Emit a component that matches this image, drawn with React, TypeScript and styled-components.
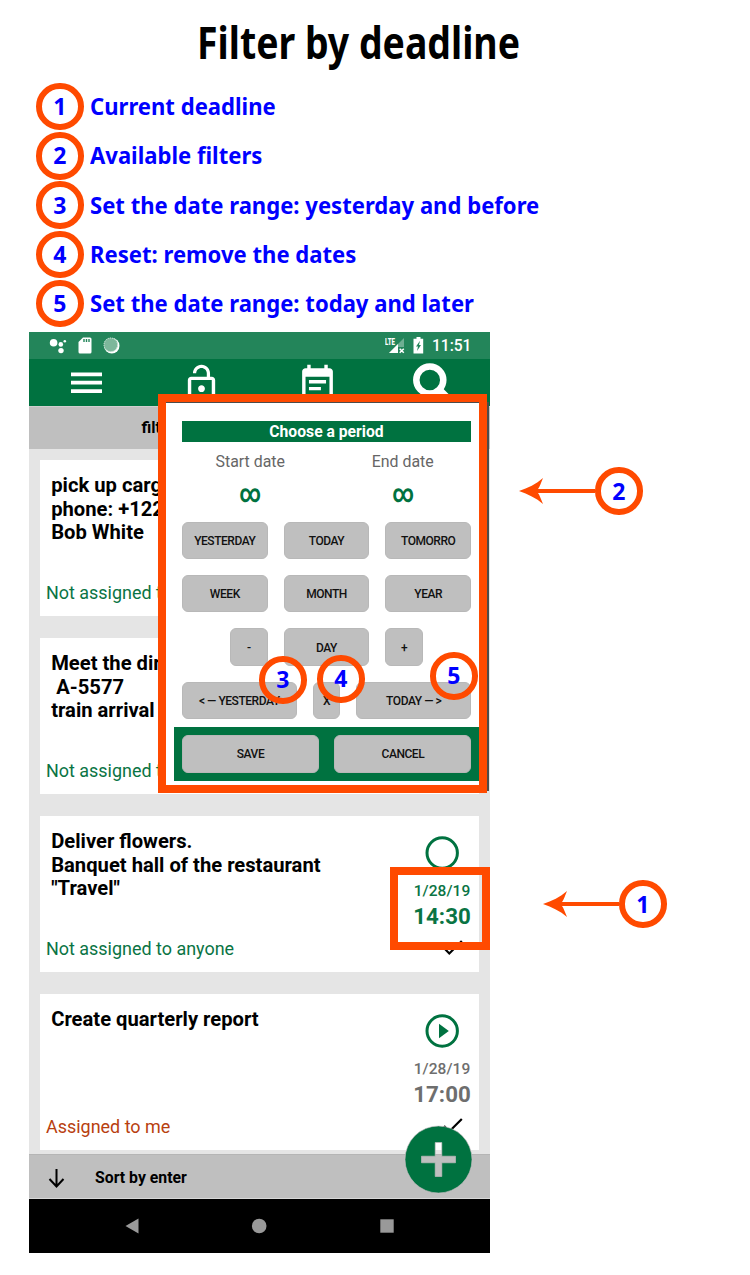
import React from "react";
import styled, { createGlobalStyle } from "styled-components";

const GREEN = "#007240";
const ORANGE = "#ff4a00";
const GREY = "#bfbfbf";

const GlobalStyle = createGlobalStyle`
  *, *::before, *::after { box-sizing: border-box; }
  body { margin: 0; background: #fff; }
`;

const Page = styled.main`
  position: relative;
  width: 750px;
  height: 1275px;
  overflow: hidden;
  background: #fff;
  font-family: Roboto, sans-serif;
`;

const Title = styled.h1`
  margin: 0 0 0 197px;
  padding-top: 12px;
  height: 82px;
  font: 700 44.5px/60px "Noto Sans", sans-serif;
  color: #000;
  white-space: nowrap;
  transform: scaleX(0.841);
  transform-origin: 0 0;
`;

const Legend = styled.ol`
  list-style: none;
  margin: 0;
  padding: 0 0 0 36px;
  height: 250px;
`;

const LegendRow = styled.li`
  display: flex;
  align-items: center;
  gap: 6px;
  height: 49.25px;
`;

const LegendText = styled.span`
  padding-bottom: 1px;
  font: 700 23px/32px "Noto Sans", sans-serif;
  color: #0000ff;
  white-space: nowrap;
  transform: scaleX(0.96);
  transform-origin: 0 50%;
`;

const Badge = styled.span`
  display: flex;
  flex: none;
  align-items: center;
  justify-content: center;
  width: 47.5px;
  height: 47.5px;
  border: 6px solid ${ORANGE};
  border-radius: 50%;
  padding-bottom: 1px;
  font: 700 23px/32px "Noto Sans", sans-serif;
  color: #0000ff;
`;

const Phone = styled.section`
  position: relative;
  display: flex;
  flex-direction: column;
  width: 461px;
  height: 921px;
  margin-left: 29px;
  background: #e5e5e5;
  overflow: hidden;
`;

const StatusBar = styled.div`
  display: flex;
  flex: none;
  align-items: center;
  height: 27px;
  padding: 0 18.5px 0 20px;
  background: #23855a;
`;

const StatusGroup = styled.div<{ $gap: number }>`
  display: flex;
  align-items: center;
  gap: ${(p) => p.$gap}px;
`;

const Clock = styled.span`
  font-size: 15.6px;
  font-weight: 500;
  line-height: 28px;
  color: #fff;
`;

const Spacer = styled.div`
  flex: 1;
`;

const AppBar = styled.nav`
  display: grid;
  flex: none;
  grid-template-columns: repeat(4, 1fr);
  justify-items: center;
  height: 47px;
  padding-top: 4px;
  background: ${GREEN};
`;

const FilterBar = styled.div`
  flex: none;
  height: 43px;
  padding: 0 0 1px 112.5px;
  border-top: 1px solid #cfcfcf;
  background: ${GREY};
  font-size: 16px;
  font-weight: 700;
  line-height: 42px;
  color: #000;
`;

const CardList = styled.div`
  display: flex;
  flex: none;
  flex-direction: column;
  gap: 22.4px;
  height: 705px;
  padding: 11px 11px 0;
`;

const Card = styled.article`
  display: flex;
  flex: none;
  justify-content: space-between;
  height: 155.6px;
  background: #fff;
`;

const CardText = styled.div`
  display: flex;
  flex-direction: column;
  justify-content: space-between;
  padding: 14.4px 0 11px 6px;
`;

const CardTitle = styled.div`
  padding-left: 5.2px;
  font-size: 20.2px;
  font-weight: 700;
  line-height: 23.3px;
  white-space: pre;
  color: #000;
`;

const Assignee = styled.div<{ $mine?: boolean }>`
  font-size: 17.95px;
  line-height: 24px;
  white-space: nowrap;
  color: ${(p) => (p.$mine ? "#b8400f" : "#0a7444")};
`;

const CardMeta = styled.div<{ $color: string }>`
  display: flex;
  flex-direction: column;
  align-items: center;
  width: 74px;
  padding-top: 20px;
  color: ${(p) => p.$color};
`;

const CardDate = styled.span`
  margin-top: 11px;
  font-size: 15.5px;
  font-weight: 500;
  line-height: 20px;
  letter-spacing: 0.05px;
`;

const CardTime = styled.span`
  margin-top: 1px;
  font-size: 22.3px;
  font-weight: 700;
  line-height: 28px;
`;

const CheckSlot = styled.div`
  height: 16px;
  margin: 10px 0 0 22px;
`;

const SortBar = styled.div`
  display: flex;
  flex: none;
  align-items: center;
  gap: 30px;
  height: 45px;
  padding: 1px 0 0 19px;
  border-top: 1px solid #b5b5b5;
  border-bottom: 1px solid #d8d8d8;
  background: ${GREY};
  font-size: 15.8px;
  font-weight: 700;
  color: #000;
`;

const NavBar = styled.div`
  display: flex;
  flex: 1;
  align-items: center;
  justify-content: space-between;
  padding: 0 96px 0 95.5px;
  background: #000;
`;

const Fab = styled.div`
  position: absolute;
  left: 375px;
  top: 793px;
  width: 69px;
  height: 69px;
`;

const Dialog = styled.div`
  position: absolute;
  left: 129px;
  top: 70px;
  display: flex;
  flex-direction: column;
  width: 331px;
  height: 389px;
  padding: 17.5px 16px 0 24px;
  border: 1px solid #4c4c4c;
  border-width: 1px 2px 1px 0;
  background: #fff;
`;

const DialogTitle = styled.div`
  flex: none;
  width: 289px;
  height: 21px;
  background: ${GREEN};
  font-size: 15.7px;
  font-weight: 700;
  line-height: 22px;
  text-align: center;
  color: #fff;
`;

const RangeGrid = styled.div`
  display: grid;
  flex: none;
  grid-template-columns: 1fr 1fr;
  grid-template-rows: 21px 30px;
  row-gap: 7px;
  column-gap: 16px;
  width: 289px;
  height: 80px;
  padding-top: 9px;
  text-align: center;
`;

const RangeLabel = styled.span`
  font-size: 15.9px;
  line-height: 21px;
  color: #666;
`;

const RangeValue = styled.span`
  font-size: 25px;
  font-weight: 700;
  line-height: 30px;
  color: ${GREEN};
  transform: scaleX(0.83);
`;

const ButtonRow = styled.div`
  display: flex;
  flex: none;
  justify-content: center;
  gap: 16.2px;
  width: 289px;
  margin-bottom: 16.1px;
`;

const PeriodButton = styled.button<{ $w: number }>`
  flex: none;
  width: ${(p) => p.$w}px;
  height: 37.4px;
  padding: 1px 0 0;
  border: 1px solid #b8b8b8;
  border-radius: 6px;
  background: ${GREY};
  font: 500 12px/16px Roboto, sans-serif;
  letter-spacing: -0.45px;
  color: #111;
  white-space: nowrap;
`;

const DialogActions = styled.div`
  display: flex;
  flex: none;
  gap: 15.4px;
  width: 312px;
  margin: -8.3px 0 0 -8px;
  padding: 8px;
  height: 54px;
  background: ${GREEN};
`;

const Frame = styled.div<{ $x: number; $y: number; $w: number; $h: number }>`
  position: absolute;
  left: ${(p) => p.$x}px;
  top: ${(p) => p.$y}px;
  width: ${(p) => p.$w}px;
  height: ${(p) => p.$h}px;
  border: 8px solid ${ORANGE};
`;

const Callout = styled.div<{ $x: number; $y: number }>`
  position: absolute;
  left: ${(p) => p.$x}px;
  top: ${(p) => p.$y}px;
  display: flex;
  align-items: center;
`;

const LEGEND = [
  "Current deadline",
  "Available filters",
  "Set the date range: yesterday and before",
  "Reset: remove the dates",
  "Set the date range: today and later",
];

const ArrowDrawing = styled.svg`
  display: block;
`;

const Arrow = () => (
  <ArrowDrawing width="76" height="28" viewBox="0 0 76 28">
    <path d="M0 14 C9 11 17 7 24 1 C22 6 20.500 10 19 12 H76 V16 H19 C20.500 18 22 22 24 27 C17 21 9 17 0 14 Z" fill={ORANGE} />
  </ArrowDrawing>
);

const MenuIcon = () => (
  <svg width="31" height="41" viewBox="0 0 31 41">
    <path d="M0 11.300H31M0 19.700H31M0 28.200H31" stroke="#fff" strokeWidth="3.700" />
  </svg>
);

const LockIcon = () => (
  <svg width="41" height="41" viewBox="0 0 24 24" fill="#fff">
    <path d="M12 17c1.100 0 2-.9 2-2s-.9-2-2-2-2 .9-2 2 .9 2 2 2zm6-9h-1V6c0-2.760-2.240-5-5-5S7 3.240 7 6h1.900c0-1.710 1.390-3.100 3.100-3.100 1.710 0 3.100 1.390 3.100 3.100v2H6c-1.100 0-2 .9-2 2v10c0 1.100.9 2 2 2h12c1.100 0 2-.9 2-2V10c0-1.100-.9-2-2-2zm0 12H6V10h12v10z" />
  </svg>
);

const NoteIcon = () => (
  <svg width="41" height="41" viewBox="0 0 24 24" fill="#fff">
    <path d="M17 10H7v2h10v-2zm2-7h-1V1h-2v2H8V1H6v2H5c-1.110 0-1.990.9-1.990 2L3 19c0 1.100.89 2 2 2h14c1.100 0 2-.9 2-2V5c0-1.100-.9-2-2-2zm0 16H5V8h14v11zm-5-5H7v2h7v-2z" />
  </svg>
);

const SearchIcon = () => (
  <svg width="41" height="44" viewBox="0 0 41 44" fill="none" stroke="#fff">
    <circle cx="17.800" cy="17" r="13.500" strokeWidth="6.500" />
    <path d="M26.500 26L39.500 39" strokeWidth="7" />
  </svg>
);

const DotsIcon = () => (
  <svg width="18" height="16" viewBox="0 0 18 16" fill="#fff">
    <circle cx="4.600" cy="4.800" r="3.800" />
    <circle cx="11.800" cy="6.400" r="2.300" />
    <circle cx="15.800" cy="3.200" r="1.300" />
    <circle cx="12" cy="12.600" r="2.700" />
  </svg>
);

const SdIcon = () => (
  <svg width="14" height="17" viewBox="0 0 14 17">
    <path d="M5 .5H12Q13.500 .5 13.500 2V15Q13.500 16.500 12 16.500H2Q.5 16.500 .5 15V5Z" fill="#fff" />
    <path d="M6 2V5M8.500 2V5M11 2V5" stroke="#23855a" strokeWidth="1.400" />
  </svg>
);

const SyncIcon = () => (
  <svg width="17" height="17" viewBox="0 0 17 17">
    <circle cx="8.800" cy="8.800" r="7.700" fill="#fff" />
    <circle cx="7.800" cy="7.800" r="7" fill="#7db79b" />
    <circle cx="7.800" cy="7.800" r="6.800" fill="none" stroke="#d5eadf" strokeWidth="1" strokeDasharray="1.200 1" />
  </svg>
);

const LteLabel = styled.span`
  align-self: flex-start;
  width: 4px;
  margin-top: -2px;
  font: 900 9.5px/11px Roboto, sans-serif;
  color: #fff;
  transform: scaleX(0.64);
  transform-origin: 0 0;
`;

const SignalIcon = () => (
  <svg width="16" height="16" viewBox="0 0 16 16">
    <path d="M15 0V15H0Z" fill="#fff" opacity=".35" />
    <path d="M9 6V15H0Z" fill="#fff" />
    <path d="M9 9H16V16H9Z" fill="#23855a" />
    <path d="M10.700 10.700L14.800 14.800M14.800 10.700L10.700 14.800" stroke="#fff" strokeWidth="1.500" />
  </svg>
);

const BatteryIcon = () => (
  <svg width="11" height="17" viewBox="0 0 11 17">
    <path d="M3.500 0H7.500V1.800H10.200V16.500H.5V1.800H3.500Z" fill="#fff" />
    <path d="M7 3.800L3 9.500H5L4 14L8 8H6Z" fill="#23855a" />
  </svg>
);

const StateDrawing = styled.svg`
  flex: none;
`;

const StateIcon = ({ playing }: { playing?: boolean }) => (
  <StateDrawing width="34" height="34" viewBox="0 0 34 34">
    <circle cx="17.200" cy="17" r="15.200" fill="none" stroke={GREEN} strokeWidth="3" />
    {playing && <path d="M14 9.700V24.300L23.800 17Z" fill={GREEN} />}
  </StateDrawing>
);

const CheckDrawing = styled.svg`
  display: block;
`;

const CheckIcon = () => (
  <CheckDrawing width="20" height="16" viewBox="0 0 20 16">
    <path d="M1 8L6.300 13.500L18.800 1" fill="none" stroke="#000" strokeWidth="2.200" />
  </CheckDrawing>
);

const DownDrawing = styled.svg`
  margin-top: 4px;
`;

const DownIcon = () => (
  <DownDrawing width="17" height="20" viewBox="0 0 17 20">
    <path d="M8.500 0V17.500M1.500 10L8.500 17.500L15.500 10" fill="none" stroke="#000" strokeWidth="2" />
  </DownDrawing>
);

export default function App() {
  return (
    <Page>
      <GlobalStyle />
      <Title>Filter by deadline</Title>
      <Legend>
        {LEGEND.map((text, i) => (
          <LegendRow key={text}>
            <Badge>{i + 1}</Badge>
            <LegendText>{text}</LegendText>
          </LegendRow>
        ))}
      </Legend>

      <Phone>
        <StatusBar>
          <StatusGroup $gap={11}>
            <DotsIcon />
            <SdIcon />
            <SyncIcon />
          </StatusGroup>
          <Spacer />
          <StatusGroup $gap={8}>
            <StatusGroup $gap={0}>
              <LteLabel>LTE</LteLabel>
              <SignalIcon />
            </StatusGroup>
            <BatteryIcon />
            <Clock>11:51</Clock>
          </StatusGroup>
        </StatusBar>
        <AppBar>
          <MenuIcon />
          <LockIcon />
          <NoteIcon />
          <SearchIcon />
        </AppBar>
        <FilterBar>filter</FilterBar>
        <CardList>
          <Card>
            <CardText>
              <CardTitle>{"pick up cargo\nphone: +122\nBob White"}</CardTitle>
              <Assignee>Not assigned to</Assignee>
            </CardText>
          </Card>
          <Card>
            <CardText>
              <CardTitle>{"Meet the dir\n A-5577\ntrain arrival"}</CardTitle>
              <Assignee>Not assigned to</Assignee>
            </CardText>
          </Card>
          <Card>
            <CardText>
              <CardTitle>{'Deliver flowers.\nBanquet hall of the restaurant\n"Travel"'}</CardTitle>
              <Assignee>Not assigned to anyone</Assignee>
            </CardText>
            <CardMeta $color="#0a7444">
              <StateIcon />
              <CardDate>1/28/19</CardDate>
              <CardTime>14:30</CardTime>
              <CheckSlot>
                <CheckIcon />
              </CheckSlot>
            </CardMeta>
          </Card>
          <Card>
            <CardText>
              <CardTitle>Create quarterly report</CardTitle>
              <Assignee $mine>Assigned to me</Assignee>
            </CardText>
            <CardMeta $color="#6e6e6e">
              <StateIcon playing />
              <CardDate>1/28/19</CardDate>
              <CardTime>17:00</CardTime>
              <CheckSlot>
                <CheckIcon />
              </CheckSlot>
            </CardMeta>
          </Card>
        </CardList>
        <SortBar>
          <DownIcon />
          Sort by enter
        </SortBar>
        <NavBar>
          <svg width="14" height="16" viewBox="0 0 14 16">
            <path d="M13.500 .5V15.500L.5 8Z" fill="#999" />
          </svg>
          <svg width="16" height="16" viewBox="0 0 16 16">
            <circle cx="8.200" cy="8" r="7.300" fill="#999" />
          </svg>
          <svg width="14" height="14" viewBox="0 0 14 14">
            <rect x=".3" y=".3" width="13.400" height="13.400" fill="#999" />
          </svg>
        </NavBar>
        <Fab>
          <svg width="69" height="69" viewBox="0 0 69 69">
            <path
              fillRule="evenodd"
              fill={GREEN}
              stroke="#cdbfc6"
              strokeWidth=".6"
              d="M34.500 1A33.500 33.500 0 1 1 34.500 68A33.500 33.500 0 1 1 34.500 1ZM31.200 17.500V31.200H17.500V37.800H31.200V51.500H37.800V37.800H51.500V31.200H37.800V17.500Z"
            />
          </svg>
        </Fab>

        <Dialog>
          <DialogTitle>Choose a period</DialogTitle>
          <RangeGrid>
            <RangeLabel>Start date</RangeLabel>
            <RangeLabel>End date</RangeLabel>
            <RangeValue>∞</RangeValue>
            <RangeValue>∞</RangeValue>
          </RangeGrid>
          <ButtonRow>
            <PeriodButton $w={85.5}>YESTERDAY</PeriodButton>
            <PeriodButton $w={85.5}>TODAY</PeriodButton>
            <PeriodButton $w={85.5}>TOMORRO</PeriodButton>
          </ButtonRow>
          <ButtonRow>
            <PeriodButton $w={85.5}>WEEK</PeriodButton>
            <PeriodButton $w={85.5}>MONTH</PeriodButton>
            <PeriodButton $w={85.5}>YEAR</PeriodButton>
          </ButtonRow>
          <ButtonRow>
            <PeriodButton $w={37.5}>-</PeriodButton>
            <PeriodButton $w={85.5}>DAY</PeriodButton>
            <PeriodButton $w={37.5}>+</PeriodButton>
          </ButtonRow>
          <ButtonRow>
            <PeriodButton $w={114.5}>&lt; — YESTERDAY</PeriodButton>
            <PeriodButton $w={27.5}>X</PeriodButton>
            <PeriodButton $w={114.5}>TODAY — &gt;</PeriodButton>
          </ButtonRow>
          <DialogActions>
            <PeriodButton $w={137}>SAVE</PeriodButton>
            <PeriodButton $w={137}>CANCEL</PeriodButton>
          </DialogActions>
        </Dialog>
      </Phone>

      <Frame $x={158} $y={394} $w={329} $h={399} />
      <Frame $x={390} $y={867} $w={100} $h={83} />
      <Callout $x={259.2} $y={656}>
        <Badge>3</Badge>
      </Callout>
      <Callout $x={317} $y={655}>
        <Badge>4</Badge>
      </Callout>
      <Callout $x={430} $y={652}>
        <Badge>5</Badge>
      </Callout>
      <Callout $x={519} $y={467.3}>
        <Arrow />
        <Badge>2</Badge>
      </Callout>
      <Callout $x={543} $y={880.3}>
        <Arrow />
        <Badge>1</Badge>
      </Callout>
    </Page>
  );
}
